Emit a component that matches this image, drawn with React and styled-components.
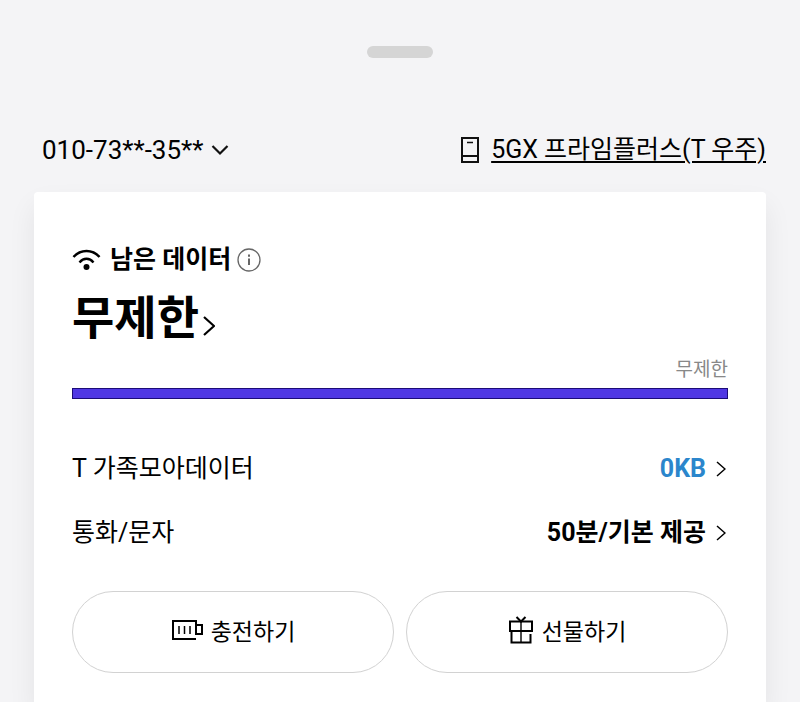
import React from 'react';
import styled, { createGlobalStyle } from 'styled-components';

export default function App() {
    return (
        <>
            <GlobalStyle />
            <Sheet>
                <Handle />
                <TopBar>
                    <NumberButton type="button">
                        010-73**-35**
                        <svg width="18" height="12" viewBox="0 0 18 12" fill="none" stroke="#111" strokeWidth="2.2" aria-hidden="true">
                            <path d="M1.5 2 9 9.5 16.5 2" />
                        </svg>
                    </NumberButton>
                    <Plan>
                        <svg width="18" height="26" viewBox="0 0 18 26" fill="none" stroke="#111" strokeWidth="2" aria-hidden="true">
                            <path d="M1 1h16v24H1zM1 19h16" />
                            <path d="M6 5.5h6" strokeWidth="1.5" />
                        </svg>
                        <PlanLink href="#plan">5GX 프라임플러스(T 우주)</PlanLink>
                    </Plan>
                </TopBar>
                <Card>
                    <Heading>
                        <svg width="30" height="24" viewBox="0 0 30 24" fill="none" stroke="#000" strokeWidth="2.4" aria-hidden="true">
                            <path d="M1.5 9C8.5 1 20.5 1 27.5 9" />
                            <path d="M7.5 14.5c4-5 10-5 14 0" />
                            <circle cx="14.5" cy="19" r="3" fill="#000" stroke="none" />
                        </svg>
                        <Title>
                            <h2>남은 데이터</h2>
                            <InfoButton type="button" aria-label="정보">
                                <svg width="24" height="24" viewBox="0 0 24 24" fill="none" stroke="#666" aria-hidden="true">
                                    <circle cx="12" cy="12" r="11" strokeWidth="1.3" />
                                    <path d="M12 10.5V17M12 6.500v2.200" strokeWidth="2" />
                                </svg>
                            </InfoButton>
                        </Title>
                    </Heading>
                    <Remaining href="#data">
                        무제한
                        <Chevron size={20} weight={2.2} />
                    </Remaining>
                    <Limit>무제한</Limit>
                    <Bar role="img" aria-label="무제한" />
                    <Rows>
                        <Row>
                            <dt>T 가족모아데이터</dt>
                            <dd>
                                <Value href="#family" $color="#2b86cc">
                                    0KB
                                    <Chevron size={16} weight={1.5} />
                                </Value>
                            </dd>
                        </Row>
                        <Row>
                            <dt>통화/문자</dt>
                            <dd>
                                <Value href="#calls">
                                    50분/기본 제공
                                    <Chevron size={16} weight={1.5} />
                                </Value>
                            </dd>
                        </Row>
                    </Rows>
                    <Actions>
                        <ActionButton type="button">
                            <svg width="32" height="22" viewBox="0 0 32 22" fill="none" stroke="#000" strokeWidth="2" aria-hidden="true">
                                <path d="M25 20H2V2h23v13h6V6h-6" />
                                <path d="M8 7v8M13.5 7v8M19 7v8" strokeWidth="1.5" />
                            </svg>
                            충전하기
                        </ActionButton>
                        <ActionButton type="button">
                            <svg width="26" height="28" viewBox="0 0 26 28" fill="none" stroke="#000" strokeWidth="2" aria-hidden="true">
                                <path d="M2 5.500h22V15H2zM3.500 15v11.500h19V18" />
                                <path d="M13 5.500v21" strokeWidth="1.4" />
                                <path d="M8.500 1 13 5.500 17.500 1" />
                            </svg>
                            선물하기
                        </ActionButton>
                    </Actions>
                </Card>
            </Sheet>
        </>
    );
}

function Chevron({ size, weight }) {
    const width = size / 2 + 2;
    return (
        <svg width={width} height={size} viewBox={`0 0 ${width} ${size}`} fill="none" stroke="#000" strokeWidth={weight} aria-hidden="true">
            <path d={`M1 1 ${width - 1} ${size / 2} 1 ${size - 1}`} />
        </svg>
    );
}

const GlobalStyle = createGlobalStyle`
  * {
    box-sizing: border-box;
  }
  body {
    margin: 0;
    background: #f4f4f6;
    color: #000;
    font-family: Roboto, "Noto Sans CJK KR", sans-serif;
  }
  h2, dl, dd, p {
    margin: 0;
  }
  button {
    font: inherit;
    color: inherit;
    background: none;
    border: none;
    padding: 0;
    cursor: pointer;
  }
  a {
    color: inherit;
    text-decoration: none;
  }
  svg {
    display: block;
    flex: none;
  }
`;

const Sheet = styled.main`
  padding: 46px 34px 0;
  overflow: hidden;
`;

const Handle = styled.div`
  width: 66px;
  height: 12px;
  margin: 0 auto;
  border-radius: 6px;
  background: #d5d5d5;
`;

const TopBar = styled.header`
  display: flex;
  justify-content: space-between;
  align-items: center;
  height: 40px;
  margin: 72px 0 22px;
  padding-left: 8px;
`;

const NumberButton = styled.button`
  && {
    display: flex;
    align-items: center;
    gap: 8px;
    font-size: 26px;
    line-height: 40px;
  }
`;

const Plan = styled.div`
  display: flex;
  align-items: center;
  gap: 12px;
`;

const PlanLink = styled.a`
  && {
    font-size: 25px;
    line-height: 40px;
    text-decoration: underline;
    text-decoration-thickness: 2px;
    text-underline-offset: 3px;
  }
`;

const Card = styled.section`
  padding: 50px 38px 30px;
  background: #fff;
  border-radius: 4px 4px 0 0;
  box-shadow: 0 14px 28px rgba(0, 0, 0, 0.07);
`;

const Heading = styled.div`
  display: flex;
  align-items: center;
  gap: 8px;
`;

const Title = styled.div`
  display: flex;
  align-items: center;
  gap: 6px;

  h2 {
    font-size: 25px;
    line-height: 36px;
    font-weight: 700;
  }
`;

const InfoButton = styled.button`
  border-radius: 50%;
`;

const Remaining = styled.a`
  display: flex;
  align-items: flex-end;
  gap: 4px;
  width: fit-content;
  margin: 8px 0 6px;
  font-size: 46px;
  line-height: 64px;
  font-weight: 700;

  svg {
    margin-bottom: 14px;
  }
`;

const Limit = styled.p`
  color: #888;
  font-size: 19px;
  line-height: 28px;
  text-align: right;
`;

const Bar = styled.div`
  height: 11px;
  margin-top: 4px;
  border: 1px solid #1c0c78;
  background: #5038e4;
`;

const Rows = styled.dl`
  padding: 38px 2px 0 0;
`;

const Row = styled.div`
  display: flex;
  justify-content: space-between;
  align-items: center;
  height: 64px;
  font-size: 25px;
  line-height: 36px;
`;

const Value = styled.a`
  && {
    display: flex;
    align-items: center;
    gap: 10px;
    color: ${({ $color }) => $color || '#000'};
    font-weight: 700;
  }
`;

const Actions = styled.div`
  display: grid;
  grid-template-columns: 1fr 1fr;
  gap: 12px;
  margin-top: 26px;
`;

const ActionButton = styled.button`
  && {
    display: flex;
    justify-content: center;
    align-items: center;
    gap: 8px;
    height: 82px;
    padding-bottom: 4px;
    border: 1px solid #d2d2d2;
    border-radius: 41px;
    font-size: 23px;
  }
`;
